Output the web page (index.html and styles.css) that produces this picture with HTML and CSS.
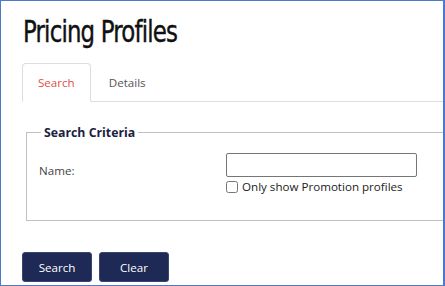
FILE: index.html
```html
<!DOCTYPE html>
<html>
<head>
<meta charset="utf-8">
<link rel="stylesheet" href="styles.css">
</head>
<body>
<div class="frame">
  <h1 class="title">Pricing Profiles</h1>
  <ul class="tabs">
    <li class="tab active">Search</li>
    <li class="tab">Details</li>
  </ul>
  <div class="panel">
    <fieldset class="criteria">
      <legend class="legend">Search Criteria</legend>
      <div class="row">
        <label class="label">Name:</label>
        <div class="field">
          <input class="text" type="text">
          <label class="check"><input class="box" type="checkbox">Only show Promotion profiles</label>
        </div>
      </div>
    </fieldset>
  </div>
  <div class="actions">
    <button class="btn">Search</button>
    <button class="btn">Clear</button>
  </div>
</div>
</body>
</html>
```
FILE: styles.css
```css
html, body {
  margin: 0;
  padding: 0;
  background: #fff;
}
.frame {
  box-sizing: border-box;
  width: 445px;
  height: 286px;
  border: 1px solid #4a7acb;
  border-right-width: 2px;
  overflow: hidden;
  font-family: "Open Sans", "Noto Sans", sans-serif;
  font-size: 11.6px;
  color: #333;
}
.title {
  margin: 12px 0 0 22px;
  font-family: "DejaVu Sans", sans-serif;
  font-stretch: condensed;
  font-weight: 500;
  font-size: 31px;
  line-height: 36px;
  color: #111;
  letter-spacing: -1px;
  -webkit-text-stroke: 0.4px #111;
  transform: scaleX(0.82);
  transform-origin: left center;
}
.tabs {
  list-style: none;
  margin: 14px 0 0 21px;
  padding: 0;
  display: flex;
  border-bottom: 1px solid #ddd;
}
.tab {
  padding: 0 15px;
  height: 37px;
  line-height: 37px;
  margin-right: 2px;
  margin-bottom: -1px;
  border: 1px solid transparent;
  border-radius: 4px 4px 0 0;
  color: #555;
}
.tab.active {
  border-color: #ddd;
  border-bottom-color: #fff;
  background: #fff;
  color: #e0504a;
}
.panel {
  padding: 22px 0 0 25px;
}
.criteria {
  margin: 0 -20px 0 0;
  padding: 12px 12px 26px 12px;
  border: 1px solid #c0c0c0;
  min-width: 0;
}
.legend {
  padding: 0 3px;
  margin-left: 2px;
  font-weight: bold;
  font-size: 12.3px;
  color: #1b2240;
}
.row {
  display: flex;
  align-items: flex-start;
}
.label {
  width: 187px;
  padding-top: 10px;
  color: #444;
}
.field {
  display: flex;
  flex-direction: column;
}
.text {
  box-sizing: border-box;
  width: 191px;
  height: 24px;
  margin: 0;
  border: 1px solid #767676;
  border-radius: 2px;
}
.check {
  display: flex;
  align-items: center;
  margin-top: 2px;
  color: #222;
}
.box {
  width: 12px;
  height: 12px;
  margin: 0 4px 0 0;
}
.actions {
  display: flex;
  gap: 7px;
  padding: 31px 0 0 21px;
}
.btn {
  box-sizing: border-box;
  width: 70px;
  height: 30px;
  border: 1px solid #3a4670;
  border-radius: 3px;
  background: #1e2955;
  color: #fff;
  font-family: "Open Sans", "Noto Sans", sans-serif;
  font-size: 11.6px;
}
```
